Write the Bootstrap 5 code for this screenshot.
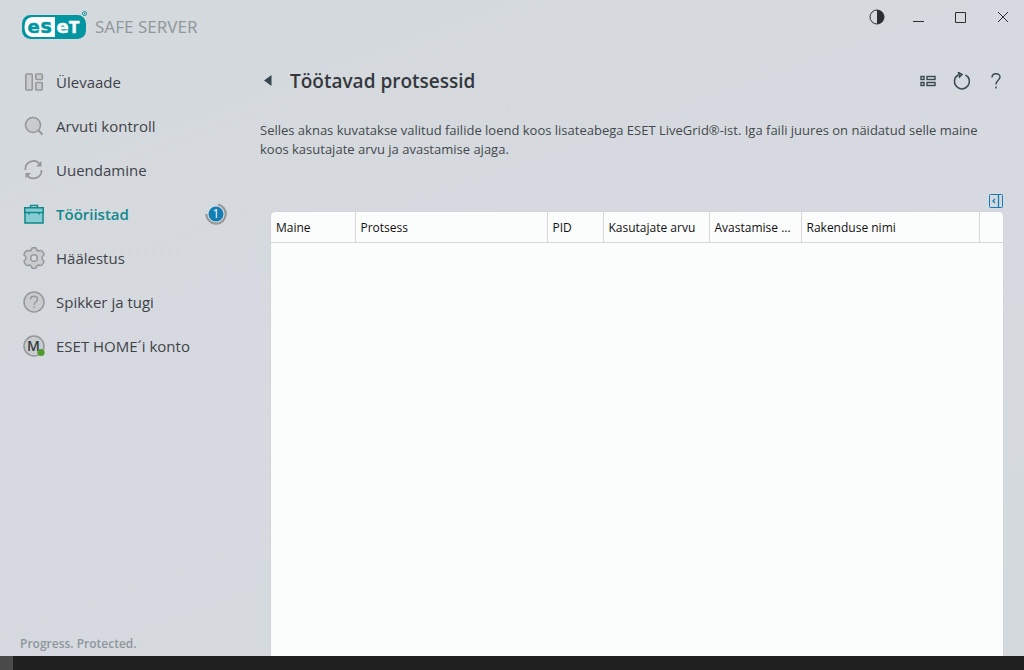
<!DOCTYPE html>
<html lang="et">
<head>
<meta charset="utf-8">
<meta name="viewport" content="width=device-width, initial-scale=1">
<title>ESET Safe Server</title>
<link href="https://cdn.jsdelivr.net/npm/bootstrap@5.3.0/dist/css/bootstrap.min.css" rel="stylesheet">
<style>
  body { font-family: "Open Sans", "Noto Sans", sans-serif; color: #3a3e43; background: #202020; }
  .app-window { background: linear-gradient(160deg, #d4d9dd, #d6dae0 50%, #d4d9dd); }
  .titlebar { height: 54px; padding: 0 0 0 22px; }
  .brand-logo { width: 68px; height: 32px; }
  .product { font-family: "Noto Sans", sans-serif; font-size: 17px; line-height: 24px; color: #91999d; margin-left: 5px; }
  .icon-btn { width: 34px; height: 34px; padding: 0; border: 0; color: #2b2f33; display: flex; align-items: center; justify-content: center; }
  .caption-btn { width: 42px; }
  .sidebar { width: 250px; padding: 6px 23px 3px 23px; }
  .side-link { height: 44px; color: #3f4348; font-size: 15px; line-height: 20px; gap: 11px; padding: 0; }
  .side-link:hover { color: #11888c; }
  .side-link.active { color: #11888c; font-weight: 600; }
  .side-link svg { width: 22px; height: 22px; flex: none; }
  .tagline { font-size: 12px; line-height: 18px; color: #8e969b; font-weight: 600; margin-left: -3px; }
  .content-area { padding: 10px 21px 0 10px; }
  .page-title { font-size: 19px; line-height: 26px; font-weight: 600; color: #34383d; }
  .page-tools { margin-right: -10px; }
  .intro { font-size: 13px; line-height: 19px; margin: 23px 0 0; color: #44484c; }
  .toggle-row { height: 32px; margin-top: 21px; }
  .panel-btn { width: 16px; height: 16px; margin-bottom: 3px; }
  .process-list { margin-left: 11px; background: #fbfcfc; border-radius: 4px 4px 0 0; box-shadow: 0 0 1px #aeb3b7; }
  .process-list table { table-layout: fixed; font-size: 12px; line-height: 18px; }
  .process-list th { height: 30px; padding: 2px 5px 0; font-weight: 400; color: #111; border-bottom: 1px solid #d6d7d8; border-right: 1px solid #d6d7d8; vertical-align: middle; }
  .process-list th:last-child { border-right: 0; }
  .taskbar { height: 14px; background: #202020; }
  .taskbar span { width: 13px; background: #4b4b4b; }
</style>
</head>
<body>
<div class="vh-100 d-flex flex-column overflow-hidden">
  <div class="app-window flex-grow-1 d-flex flex-column overflow-hidden">
    <header class="titlebar d-flex justify-content-between">
      <div class="d-flex align-items-center">
        <svg class="brand-logo" viewBox="0 0 68 32" role="img" aria-label="ESET">
          <rect x="0" y="4" width="64" height="24" rx="8.500" fill="#0096a1"/>
          <path d="M10 6H33V26H10Q2.500 25 2.500 16Q2.500 7 10 6Z" fill="#fff"/>
          <g font-family="DejaVu Sans, sans-serif" font-weight="700" font-size="18" stroke-width=".5">
            <text x="5.500" y="21.500" fill="#0096a1" stroke="#0096a1">e</text>
            <text x="18.500" y="21.500" font-size="19" fill="#0096a1" stroke="#0096a1">s</text>
            <text x="34.500" y="21.500" fill="#fff" stroke="#fff">e</text>
            <text x="47" y="21.500" fill="#fff" stroke="#fff" font-size="15">T</text>
          </g>
          <circle cx="62.500" cy="2.500" r="2" fill="none" stroke="#0096a1"/>
          <circle cx="62.500" cy="2.500" r=".7" fill="#0096a1"/>
        </svg>
        <span class="product">SAFE SERVER</span>
      </div>
      <div class="d-flex">
        <button class="btn icon-btn caption-btn" aria-label="Teema"><svg width="16" height="16"><circle cx="8" cy="8" r="7" fill="none" stroke="currentColor"/><path d="M8 1A7 7 0 0 1 8 15Z" fill="currentColor"/></svg></button>
        <button class="btn icon-btn caption-btn" aria-label="Minimeeri"><svg width="12" height="12"><path d="M0 10.500H11" stroke="currentColor"/></svg></button>
        <button class="btn icon-btn caption-btn" aria-label="Maksimeeri"><svg width="12" height="12"><path d="M.5 1.500H10.500V11.500H.5Z" fill="none" stroke="currentColor"/></svg></button>
        <button class="btn icon-btn caption-btn" aria-label="Sulge"><svg width="12" height="12"><path d="M1 1L11 11M11 1L1 11" stroke="currentColor"/></svg></button>
      </div>
    </header>

    <div class="d-flex flex-grow-1 overflow-hidden">
      <aside class="sidebar d-flex flex-column flex-shrink-0">
        <nav class="nav flex-column">
          <a class="nav-link side-link d-flex align-items-center" href="#">
            <svg viewBox="0 0 22 22" fill="#c8cccf" stroke="#969798" stroke-width="1.600"><rect x="2.800" y="3" width="6.500" height="16" rx="1"/><rect x="12.800" y="3" width="6.500" height="5.500" rx="1"/><rect x="12.800" y="11.500" width="6.500" height="7.500" rx="1"/></svg>
            Ülevaade</a>
          <a class="nav-link side-link d-flex align-items-center" href="#">
            <svg viewBox="0 0 22 22" fill="#c8cccf" stroke="#969798" stroke-width="1.600"><circle cx="10" cy="10" r="7.500"/><path d="M15.500 15.500L19.500 19.500" stroke-width="2"/></svg>
            Arvuti kontroll</a>
          <a class="nav-link side-link d-flex align-items-center" href="#">
            <svg viewBox="0 0 22 22" fill="none" stroke="#969798" stroke-width="1.700"><path d="M2.500 11A8 8 0 0 1 17 5.500M18.500 11A8 8 0 0 1 4 16"/><path d="M18.500 2V7.500H13ZM2.500 19.500V14H8Z" fill="#969798" stroke="none"/></svg>
            Uuendamine</a>
          <a class="nav-link side-link active d-flex align-items-center" href="#" aria-current="page">
            <svg viewBox="0 0 22 22" fill="#86cdd2" stroke="#11888c" stroke-width="1.500"><path d="M7.500 5V2.500H14.500V5" fill="none"/><rect x="1.750" y="4.750" width="18.500" height="5"/><rect x="2" y="9.500" width="18" height="10.500"/><path d="M6 9.500V11.500M16 9.500V11.500"/></svg>
            Tööriistad
            <svg class="ms-auto" viewBox="0 0 22 22"><path d="M13 1.500A9.700 9.700 0 1 1 1.300 11" fill="none" stroke="#969798" stroke-width="2.200"/><circle cx="11" cy="11" r="7.500" fill="#147db3"/><text x="11" y="15" text-anchor="middle" fill="#fff" font-size="12" font-weight="400">1</text></svg></a>
          <a class="nav-link side-link d-flex align-items-center" href="#">
            <svg viewBox="0 0 22 22" fill="#c8cccf" stroke="#969798" stroke-width="1.500" stroke-linejoin="round"><path d="M9 1Q11 .3 13 1Q13.500 3.500 15.500 4Q17.500 3 19 4Q20.800 5.800 21 8Q19 9.500 19 11Q19 12.500 21 14Q20.800 16.200 19 18Q17.500 19 15.500 18Q13.500 18.500 13 21Q11 21.700 9 21Q8.500 18.500 6.500 18Q4.500 19 3 18Q1.200 16.200 1 14Q3 12.500 3 11Q3 9.500 1 8Q1.200 5.800 3 4Q4.500 3 6.500 4Q8.500 3.500 9 1Z"/><circle cx="11" cy="11" r="3.300" fill="#d5d9de"/></svg>
            Häälestus</a>
          <a class="nav-link side-link d-flex align-items-center" href="#">
            <svg viewBox="0 0 22 22" fill="#c8cccf" stroke="#969798" stroke-width="1.500"><circle cx="11" cy="11" r="10"/><path d="M7.500 8.500C7.500 4 14.500 4 14.500 8.500C14.500 11 11 11 11 14M11 15.500V17" fill="none"/></svg>
            Spikker ja tugi</a>
          <a class="nav-link side-link d-flex align-items-center" href="#">
            <svg viewBox="0 0 22 22"><circle cx="11" cy="11" r="10" fill="#c8cccf" stroke="#969798" stroke-width="1.500"/><text x="10.500" y="16" text-anchor="middle" font-size="14" font-weight="600" fill="#34383d">M</text><circle cx="18" cy="17.500" r="3.600" fill="#4f9a2a"/></svg>
            ESET HOME´i konto</a>
        </nav>
        <div class="tagline mt-auto">Progress. Protected.</div>
      </aside>

      <main class="content-area flex-grow-1 d-flex flex-column">
        <div class="d-flex align-items-center">
          <button class="btn p-0 border-0 d-flex me-3" aria-label="Tagasi"><svg width="14" height="12"><path d="M11.500 0V11L4 5.500Z" fill="#36474f"/></svg></button>
          <h1 class="page-title m-0">Töötavad protsessid</h1>
          <div class="page-tools d-flex ms-auto">
            <button class="btn icon-btn" aria-label="Loendivaade"><svg width="16" height="12" fill="none" stroke="#36474f" stroke-width="1.400"><rect x="1" y="1.500" width="3" height="3"/><rect x="7" y="1.500" width="8" height="3"/><rect x="1" y="7.500" width="3" height="3"/><rect x="7" y="7.500" width="8" height="3"/></svg></button>
            <button class="btn icon-btn" aria-label="Värskenda"><svg width="18" height="18" fill="none" stroke="#36474f" stroke-width="1.500"><path d="M12.500 2.800A7.500 7.500 0 1 1 5 3"/><path d="M5.500 .5L9 2.500L6.500 5Z" /></svg></button>
            <button class="btn icon-btn" aria-label="Abi"><svg width="12" height="18" fill="none" stroke="#36474f" stroke-width="1.400"><path d="M2 5.500C2 .5 10 .5 10 5C10 8 6 8 6 12.500M6 14.500V16.500"/></svg></button>
          </div>
        </div>
        <p class="intro">Selles aknas kuvatakse valitud failide loend koos lisateabega ESET LiveGrid®-ist. Iga faili juures on näidatud selle maine koos kasutajate arvu ja avastamise ajaga.</p>
        <div class="toggle-row d-flex justify-content-end align-items-end">
          <button class="btn p-0 border-0 d-flex panel-btn" aria-label="Paneel"><svg width="16" height="16" fill="none" stroke="#147db3"><rect x="2.500" y="1.500" width="13" height="13" rx="1"/><path d="M11.500 1.500V14.500M8 6L6 8L8 10" stroke-width="1.300"/></svg></button>
        </div>
        <section class="process-list flex-grow-1">
          <table class="w-100">
            <colgroup><col style="width:84px"><col style="width:192px"><col style="width:56px"><col style="width:106px"><col style="width:92px"><col style="width:178px"><col></colgroup>
            <thead><tr>
              <th scope="col">Maine</th><th scope="col">Protsess</th><th scope="col">PID</th><th scope="col" class="text-nowrap">Kasutajate arvu</th><th scope="col" class="text-nowrap">Avastamise ...</th><th scope="col">Rakenduse nimi</th><th></th>
            </tr></thead>
          </table>
        </section>
      </main>
    </div>
  </div>
  <footer class="taskbar d-flex flex-shrink-0"><span></span></footer>
</div>
<script src="https://cdn.jsdelivr.net/npm/bootstrap@5.3.0/dist/js/bootstrap.bundle.min.js"></script>
</body>
</html>
